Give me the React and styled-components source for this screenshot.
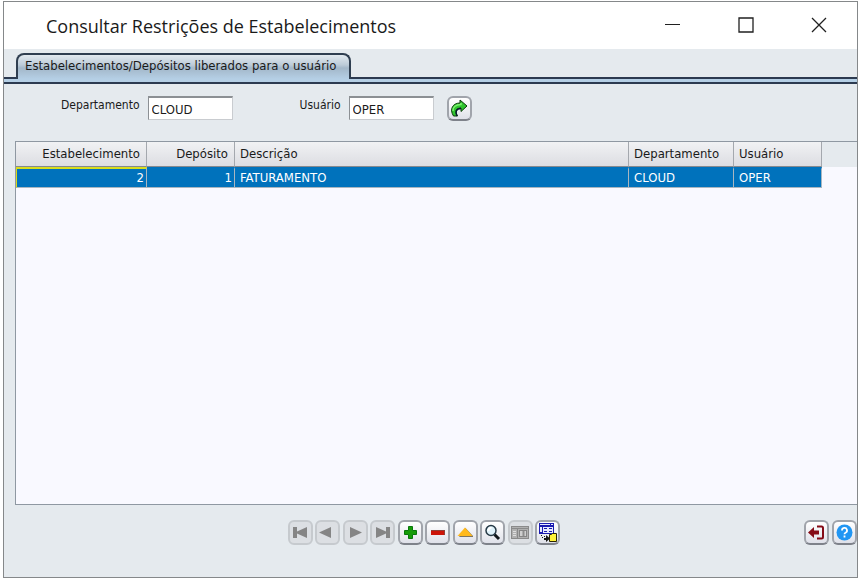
import React from "react";
import styled, { createGlobalStyle, css } from "styled-components";

const GlobalStyle = createGlobalStyle`
  * {
    box-sizing: border-box;
  }
  body {
    margin: 0;
    background-color: #ffffff;
    font-family: "DejaVu Sans Condensed", "Noto Sans", sans-serif;
    color: #1a1a1a;
  }
  button, input {
    font-family: inherit;
    color: inherit;
  }
`;

const Page = styled.div`
  display: flex;
  height: 100vh;
  padding: 1px 1px 2px 3px;
`;

const Window = styled.main`
  display: flex;
  flex: 1;
  min-width: 0;
  flex-direction: column;
  border: 1px solid #85888a;
  background-color: #e5eaee;
`;

const TitleBar = styled.header`
  display: flex;
  flex-shrink: 0;
  align-items: center;
  justify-content: space-between;
  height: 47px;
  padding: 0 22px 0 42px;
  background-color: #ffffff;
`;

const Title = styled.h1`
  margin: 0;
  font-family: "Open Sans", sans-serif;
  font-size: 18px;
  line-height: 24px;
  font-weight: normal;
  white-space: nowrap;
`;

const WindowControls = styled.div`
  display: flex;
  gap: 41px;
`;

const WindowButton = styled.button`
  display: flex;
  align-items: center;
  justify-content: center;
  width: 32px;
  height: 32px;
  padding: 0 0 2px;
  border: none;
  background-color: transparent;
`;

const TabBar = styled.div`
  display: flex;
  flex-shrink: 0;
  align-items: flex-start;
  height: 35px;
  padding-top: 4px;
  border-bottom: 2px solid #2c3a50;
  background: linear-gradient(#2c3a50, #2c3a50) 0 28px / 100% 2px no-repeat,
    linear-gradient(#b5cfe5, #b5cfe5) 0 30px / 100% 3px no-repeat;
`;

const Tab = styled.button`
  height: 26px;
  margin-left: 12px;
  padding: 0 13px 2px 7px;
  border: 2px solid #2f3e50;
  border-bottom: none;
  border-radius: 8px 8px 0 0;
  background: linear-gradient(#e2e9ef 0, #bccbd8 10px, #a3b7c9 13px, #b5cfe5 100%);
  font-size: 13px;
  line-height: 20px;
  white-space: nowrap;
`;

const Filters = styled.form`
  display: flex;
  flex-shrink: 0;
  align-items: flex-start;
  height: 57px;
  padding: 12px 0 0 57px;
`;

const Field = styled.label`
  display: flex;
  gap: 8px;
  margin-right: ${(props) => props.$space};
  font-size: 12px;
  line-height: 18px;
`;

const TextInput = styled.input`
  width: 85px;
  height: 24px;
  padding: 1px 3px 0;
  border: 1px solid #c9ccd0;
  border-top: 2px solid #8c9094;
  border-left-color: #8c9094;
  border-radius: 0;
  background-color: #ffffff;
  font-size: 13px;
  outline: none;
`;

const ToolButton = styled.button`
  display: flex;
  flex-shrink: 0;
  align-items: center;
  justify-content: center;
  width: 25px;
  height: 25px;
  padding: 0;
  border: 2px solid #a0a4ab;
  border-bottom-color: #7e828a;
  border-radius: 6px;
  background: linear-gradient(#ffffff, #dfe1e9);
  ${(props) =>
    props.disabled &&
    css`
      border-color: #c6cace;
      background: #dcdfe3;
    `}
`;

const Grid = styled.section`
  flex: 1;
  min-height: 0;
  margin-left: 11px;
  border: 1px solid #8f98a2;
  border-right: none;
  background: linear-gradient(#e5eaee, #e5eaee) 0 0 / 100% 25px no-repeat
    #f9f9ff;
`;

const Table = styled.table`
  width: calc(100% - 35px);
  table-layout: fixed;
  border-collapse: separate;
  border-spacing: 0;
  font-size: 13px;
  line-height: 18px;
`;

const HeadCell = styled.th`
  width: ${(props) => props.$width};
  height: 25px;
  padding: 0 6px 0 5px;
  border-right: 1px solid #a4a8ae;
  border-bottom: 1px solid #85898f;
  background: linear-gradient(#f1f2f4, #dcdde2);
  font-weight: normal;
  text-align: ${(props) => (props.$right ? "right" : "left")};
`;

const Cell = styled.td`
  height: 21px;
  padding: 0 2px 0 5px;
  border-top: 2px solid ${(props) => (props.$focused ? "#d9dc1c" : "#0072bc")};
  border-right: 1px solid #a9b6c0;
  border-bottom: 1px solid #a9b6c0;
  border-left: ${(props) => (props.$focused ? "1px solid #d9dc1c" : "none")};
  background-color: #0072bc;
  color: #ffffff;
  text-align: ${(props) => (props.$right ? "right" : "left")};
`;

const Footer = styled.footer`
  display: grid;
  flex-shrink: 0;
  grid-template-columns: 1fr auto 1fr;
  height: 72px;
  padding-top: 15px;
`;

const Toolbar = styled.div`
  display: flex;
  grid-column: 2;
  justify-content: space-between;
  width: 272px;
  margin-right: 13px;
`;

const Actions = styled.div`
  display: flex;
  justify-content: flex-end;
  gap: 3px;
`;

const Icon = ({ children, size = 21 }) => (
  <svg width={size} height={size} viewBox="0 0 21 21" aria-hidden="true">
    {children}
  </svg>
);

const ARROW = "#858585";

const tools = [
  {
    label: "Primeiro",
    disabled: true,
    icon: <path fill={ARROW} d="M3 5h4v4.500L17 5v11L7 11.500V16H3z" />,
  },
  {
    label: "Anterior",
    disabled: true,
    icon: <path fill={ARROW} d="M2 10.500 14 5v11z" />,
  },
  {
    label: "Próximo",
    disabled: true,
    icon: <path fill={ARROW} d="M5 5l12 5.500L5 16z" />,
  },
  {
    label: "Último",
    disabled: true,
    icon: <path fill={ARROW} d="M4 5l10 4.500V5h4v11h-4v-4.500L4 16z" />,
  },
  {
    label: "Incluir",
    icon: (
      <path
        fill="#169c08"
        stroke="#08780b"
        strokeWidth="1"
        d="M8.500 4.500h4v4h4v4h-4v4h-4v-4h-4v-4h4z"
      />
    ),
  },
  {
    label: "Excluir",
    icon: (
      <>
        <rect x="4" y="8" width="14" height="5" fill="#8f4038" />
        <rect x="4" y="9" width="13" height="4" fill="#cc1408" />
      </>
    ),
  },
  {
    label: "Alterar",
    icon: (
      <>
        <path fill="#7c7460" d="M10.500 6 18 14v1H4z" />
        <path fill="#ffb91c" d="M10 5.500 17.500 14h-15z" />
      </>
    ),
  },
  {
    label: "Pesquisar",
    icon: (
      <>
        <path d="M12.500 12.500l4.500 4.500" stroke="#10161a" strokeWidth="3" />
        <circle
          cx="9"
          cy="8.500"
          r="5"
          fill="#dff2fb"
          stroke="#263945"
          strokeWidth="1.500"
        />
        <path d="M6.500 9a2.500 2.500 0 0 1 3-3" fill="none" stroke="#ffffff" strokeWidth="2" />
      </>
    ),
  },
  {
    label: "Formulário",
    disabled: true,
    icon: (
      <>
        <rect x="1.500" y="4.500" width="17" height="12" fill="#b0b0b0" stroke="#8a8a8a" />
        <path d="M2 6.500h16M7.500 7v9" stroke="#8a8a8a" />
        <path d="M3 9h3v1H3zM3 11h3v1H3zM3 13h3v1H3z" fill="#dedede" />
        <rect x="9.500" y="8.500" width="7" height="6" fill="#cfcfcf" stroke="#858585" />
        <path d="M13.500 9v5" stroke="#8d8d8d" strokeWidth="2" />
      </>
    ),
  },
  {
    label: "Exportar",
    icon: (
      <>
        <rect x="2" y="1" width="15" height="11" fill="#1b1bb0" />
        <path d="M3 2h10v1H3zM14 2h2v1h-2zM3 5h2v5H3z" fill="#e8ebff" />
        <rect x="6" y="5" width="10" height="6" fill="#e8ebff" />
        <path d="M7 6h3v1H7zM12 6h3v1h-3zM7 9h3v1H7zM12 9h3v1h-3z" fill="#1b1bb0" />
        <path d="M4 13h1v1H4zM5 15h1v1H5zM7 14h1v1H7zM7 16h2v-3l4 3.500-4 3.500v-2H7z" fill="#171717" />
        <path d="M12.500 12.500h2l1-1h4v8h-7z" fill="#fff23a" stroke="#292400" />
      </>
    ),
  },
];

const columns = [
  { name: "Estabelecimento", width: "131px", value: "2", right: true },
  { name: "Depósito", width: "88px", value: "1", right: true },
  { name: "Descrição", value: "FATURAMENTO" },
  { name: "Departamento", width: "105px", value: "CLOUD" },
  { name: "Usuário", width: "88px", value: "OPER" },
];

const App = () => {
  return (
    <Page>
      <GlobalStyle />
      <Window>
        <TitleBar>
          <Title>Consultar Restrições de Estabelecimentos</Title>
          <WindowControls>
            <WindowButton aria-label="Minimizar">
              <svg width="16" height="16">
                <path d="M0 7.500h15" stroke="#202020" />
              </svg>
            </WindowButton>
            <WindowButton aria-label="Maximizar">
              <svg width="16" height="16">
                <path d="M1 1h14v14H1z" fill="none" stroke="#202020" strokeWidth="1.300" />
              </svg>
            </WindowButton>
            <WindowButton aria-label="Fechar">
              <svg width="16" height="16">
                <path d="M1 1l14 14M15 1L1 15" stroke="#202020" strokeWidth="1.300" />
              </svg>
            </WindowButton>
          </WindowControls>
        </TitleBar>
        <TabBar role="tablist">
          <Tab role="tab" aria-selected="true">
            Estabelecimentos/Depósitos liberados para o usuário
          </Tab>
        </TabBar>
        <Filters onSubmit={(e) => e.preventDefault()}>
          <Field $space="67px">
            Departamento
            <TextInput name="departamento" defaultValue="CLOUD" />
          </Field>
          <Field $space="13px">
            Usuário
            <TextInput name="usuario" defaultValue="OPER" />
          </Field>
          <ToolButton type="submit" aria-label="Atualizar">
            <Icon>
              <path
                d="M4.500 18C0 11 4 5 11 5V2l7 6-6 5.500V10C7 10 5.500 13 8.500 18z"
                fill="#2fc42f"
                stroke="#0a3a0a"
                strokeWidth="1"
              />
              <path d="M4 13c-.5-4 3-6.500 8-6.500V5" fill="none" stroke="#7df06e" strokeWidth="1.500" />
              <path d="M8 18c-2-4-1-7.500 4-7.500" fill="none" stroke="#06182c" strokeWidth="1.500" />
            </Icon>
          </ToolButton>
        </Filters>
        <Grid>
          <Table>
            <thead>
              <tr>
                {columns.map((col) => (
                  <HeadCell key={col.name} $width={col.width} $right={col.right}>
                    {col.name}
                  </HeadCell>
                ))}
              </tr>
            </thead>
            <tbody>
              <tr>
                {columns.map((col, i) => (
                  <Cell key={col.name} $right={col.right} $focused={i === 0}>
                    {col.value}
                  </Cell>
                ))}
              </tr>
            </tbody>
          </Table>
        </Grid>
        <Footer>
          <Toolbar>
            {tools.map((tool) => (
              <ToolButton key={tool.label} aria-label={tool.label} disabled={tool.disabled}>
                <Icon>{tool.icon}</Icon>
              </ToolButton>
            ))}
          </Toolbar>
          <Actions>
            <ToolButton aria-label="Sair">
              <Icon>
                <path d="M2 10.500 8 5v3.500h5v4H8V16z" fill="#850b16" />
                <path
                  d="M11 4.500h4.500a1.500 1.500 0 0 1 1.500 1.500v9a1.500 1.500 0 0 1-1.500 1.500H11"
                  fill="none"
                  stroke="#850b16"
                  strokeWidth="2"
                />
              </Icon>
            </ToolButton>
            <ToolButton aria-label="Ajuda">
              <Icon>
                <circle cx="10.500" cy="10.500" r="8" fill="#2196f3" />
                <path
                  d="M8 8.500a2.500 2.500 0 1 1 3.500 2.200q-1 .5-1 1.500M10.500 13.500v2"
                  fill="none"
                  stroke="#ffffff"
                  strokeWidth="1.800"
                />
              </Icon>
            </ToolButton>
          </Actions>
        </Footer>
      </Window>
    </Page>
  );
};

export default App;
